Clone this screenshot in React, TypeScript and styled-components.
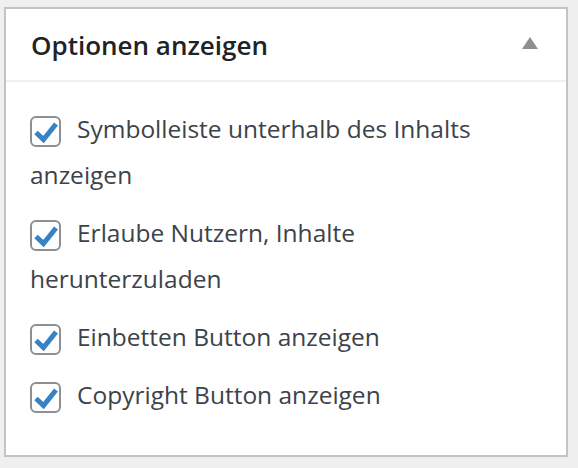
import React from "react";
import styled, { createGlobalStyle } from "styled-components";

const Global = createGlobalStyle`
  html, body { margin: 0; padding: 0; background: #f0f0f1; }
  body { font-family: "Open Sans", "Noto Sans", sans-serif; }
`;

const Page = styled.div`
  padding: 7px 10px 11px 4px;
`;

const Panel = styled.section`
  box-sizing: border-box;
  width: 564px;
  height: 450px;
  background: #fff;
  border: 2px solid #c3c4c7;
`;

const Header = styled.header`
  box-sizing: border-box;
  height: 73px;
  display: flex;
  align-items: center;
  justify-content: space-between;
  padding: 0 28px 0 25px;
  border-bottom: 2px solid #f0f0f1;
`;

const Title = styled.h2`
  margin: 0;
  font-size: 26px;
  font-weight: 600;
  color: #1d2327;
`;

const Toggle = styled.svg`
  width: 16px;
  height: 12px;
  display: block;
  margin-bottom: 4px;
`;

const Body = styled.div`
  padding: 24px 24px 0 24px;
  display: flex;
  flex-direction: column;
  gap: 12px;
`;

const Option = styled.label`
  display: block;
  font-size: 24.5px;
  line-height: 46px;
  color: #3c434a;
`;

const Box = styled.span`
  box-sizing: border-box;
  display: inline-flex;
  align-items: center;
  justify-content: center;
  width: 31px;
  height: 31px;
  margin-right: 16px;
  vertical-align: -7px;
  border: 2px solid #8c8f94;
  border-radius: 6px;
  background: #fff;
`;

const Check = () => (
  <svg width="27" height="27" viewBox="0 0 27 27">
    <path d="M4 14.5 L11.5 21.5 L24 6" fill="none" stroke="#3582c4" strokeWidth="5" />
  </svg>
);

const options = [
  "Symbolleiste unterhalb des Inhalts anzeigen",
  "Erlaube Nutzern, Inhalte herunterzuladen",
  "Einbetten Button anzeigen",
  "Copyright Button anzeigen",
];

export default function App() {
  return (
    <>
      <Global />
      <Page>
        <Panel>
          <Header>
            <Title>Optionen anzeigen</Title>
            <Toggle viewBox="0 0 16 12">
              <polygon points="8,0 16,12 0,12" fill="#8c8f94" />
            </Toggle>
          </Header>
          <Body>
            {options.map((o) => (
              <Option key={o}>
                <Box>
                  <Check />
                </Box>
                {o}
              </Option>
            ))}
          </Body>
        </Panel>
      </Page>
    </>
  );
}
